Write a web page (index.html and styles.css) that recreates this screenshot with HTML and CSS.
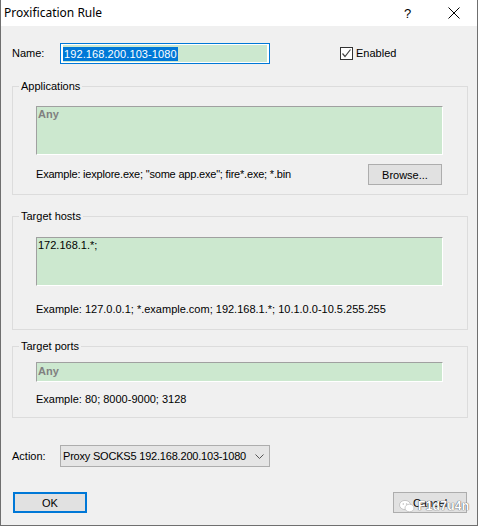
FILE: index.html
```html
<!DOCTYPE html>
<html>
<head>
<meta charset="utf-8">
<link rel="stylesheet" href="styles.css">
</head>
<body>
<div class="window">
  <div class="titlebar">
    <span class="title">Proxification Rule</span>
    <span class="help">?</span>
    <svg class="close" width="12" height="12" viewBox="0 0 12 12"><path d="M0.5 0.5 L11.5 11.5 M11.5 0.5 L0.5 11.5" stroke="#000" stroke-width="1" fill="none"/></svg>
  </div>
  <div class="content">
    <div class="name-row">
      <span class="label">Name:</span>
      <div class="name-input"><div class="name-fill"><span class="sel">192.168.200.103-1080</span></div></div>
      <div class="enabled">
        <span class="checkbox"><svg width="11" height="11" viewBox="0 0 11 11"><path d="M1.5 5.5 L4 8.5 L9.5 1.5" stroke="#444" stroke-width="1.2" fill="none"/></svg></span>
        <span>Enabled</span>
      </div>
    </div>

    <div class="group group-apps">
      <span class="group-label">Applications</span>
      <div class="field tall"><span class="any">Any</span></div>
      <div class="example-row">
        <span class="example">Example: iexplore.exe; "some app.exe"; fire*.exe; *.bin</span>
        <button class="btn browse">Browse...</button>
      </div>
    </div>

    <div class="group group-hosts">
      <span class="group-label">Target hosts</span>
      <div class="field tall"><span class="value">172.168.1.*;</span></div>
      <div class="example">Example: 127.0.0.1; *.example.com; 192.168.1.*; 10.1.0.0-10.5.255.255</div>
    </div>

    <div class="group group-ports">
      <span class="group-label">Target ports</span>
      <div class="field short"><span class="any">Any</span></div>
      <div class="example">Example: 80; 8000-9000; 3128</div>
    </div>

    <div class="action-row">
      <span class="label">Action:</span>
      <div class="select">
        <span class="select-text">Proxy SOCKS5 192.168.200.103-1080</span>
        <svg class="chev" width="9" height="5" viewBox="0 0 9 5"><path d="M0.5 0.5 L4.5 4.5 L8.5 0.5" stroke="#555" stroke-width="1" fill="none"/></svg>
      </div>
    </div>

    <div class="button-row">
      <button class="btn ok">OK</button>
      <div class="cancel-wrap">
        <button class="btn cancel">Cancel</button>
        <div class="watermark">
          <svg width="16" height="14" viewBox="0 0 16 14"><ellipse cx="6" cy="6" rx="5.5" ry="4.6" fill="#fff" stroke="#bbb" stroke-width="0.8"/><ellipse cx="10.5" cy="9" rx="4.5" ry="3.8" fill="#fff" stroke="#bbb" stroke-width="0.8"/><circle cx="4.3" cy="5" r="0.8" fill="#bbb"/><circle cx="7.6" cy="5" r="0.8" fill="#bbb"/></svg>
          <span class="wm-text">F1d7u4n</span>
        </div>
      </div>
    </div>
  </div>
</div>
</body>
</html>
```

FILE: styles.css
```css
html, body {
  margin: 0;
  padding: 0;
  background: #f0f0f0;
}
body {
  font-family: "Liberation Sans", Arial, sans-serif;
  font-size: 11px;
  line-height: 13px;
  color: #000;
}
.window {
  width: 478px;
  height: 526px;
  box-sizing: border-box;
  border: 1px solid #6f6f6f;
  border-top: none;
  background: #f0f0f0;
  display: flex;
  flex-direction: column;
}
.titlebar {
  height: 26px;
  flex: none;
  background: #fff;
  display: flex;
  align-items: center;
}
.title {
  font-family: "Noto Sans", "Liberation Sans", sans-serif;
  font-size: 12px;
  padding-left: 3px;
  flex: 1;
  line-height: 16px;
}
.help {
  font-family: "Liberation Sans", sans-serif;
  font-size: 13px;
  width: 8px;
  margin-right: 36px;
}
.close {
  margin-right: 17px;
}
.content {
  padding: 17px 0 0 11px;
  display: flex;
  flex-direction: column;
}
.name-row {
  display: flex;
  align-items: center;
  height: 21px;
}
.label {
  width: 48px;
}
.name-input {
  width: 210px;
  height: 21px;
  box-sizing: border-box;
  border: 1px solid #0078d7;
  background: #fff;
  padding: 1px 2px;
}
.name-fill {
  height: 17px;
  background: #cce8cf;
  display: flex;
  align-items: center;
}
.sel {
  background: #0078d7;
  color: #fff;
  font-size: 11px;
  line-height: 14px;
  padding: 0 1px;
  letter-spacing: 0.1px;
}
.enabled {
  display: flex;
  align-items: center;
  margin-left: 70px;
  gap: 3px;
}
.checkbox {
  width: 13px;
  height: 13px;
  box-sizing: border-box;
  border: 1px solid #333;
  background: #fff;
  display: flex;
  align-items: center;
  justify-content: center;
}
.group {
  position: relative;
  width: 456px;
  box-sizing: border-box;
  border: 1px solid #dcdcdc;
  padding-left: 23px;
}
.group-label {
  position: absolute;
  top: -7px;
  left: 6px;
  padding: 0 2px;
  background: #f0f0f0;
  line-height: 13px;
}
.group-apps {
  margin-top: 22px;
  padding-top: 19px;
  padding-bottom: 9px;
}
.group-hosts {
  margin-top: 21px;
  padding-top: 20px;
  padding-bottom: 13px;
}
.group-ports {
  margin-top: 16px;
  padding-top: 15px;
  padding-bottom: 11px;
}
.field {
  width: 407px;
  box-sizing: border-box;
  background: #cce8cf;
  border-top: 1px solid #a0a0a0;
  border-left: 1px solid #a0a0a0;
  border-right: 1px solid #fff;
  border-bottom: 1px solid #fff;
  padding: 1px 1px;
}
.field.tall { height: 49px; }
.field.short { height: 20px; padding-top: 2px; }
.any {
  font-weight: bold;
  color: #808080;
}
.group-hosts .example { margin-top: 17px; }
.group-ports .example { margin-top: 11px; }
.example-row {
  margin-top: 9px;
  height: 21px;
  width: 406px;
  display: flex;
  align-items: center;
  justify-content: space-between;
}
.example-row .example {
  letter-spacing: -0.2px;
}
.btn {
  font-family: "Liberation Sans", Arial, sans-serif;
  font-size: 11px;
  background: #e1e1e1;
  border: 1px solid #adadad;
  color: #000;
  padding: 0;
  margin: 0;
  width: 74px;
  height: 21px;
  box-sizing: border-box;
}
.btn.ok {
  border: 2px solid #0078d7;
}
.action-row {
  margin-top: 27px;
  display: flex;
  align-items: center;
  height: 22px;
}
.select {
  width: 210px;
  height: 22px;
  box-sizing: border-box;
  border: 1px solid #adadad;
  background: #e5e5e5;
  display: flex;
  align-items: center;
  justify-content: space-between;
  padding: 0 5px 0 2px;
}
.select-text {
  white-space: nowrap;
  font-size: 11px;
  letter-spacing: -0.2px;
}
.button-row {
  margin-top: 25px;
  display: flex;
  justify-content: space-between;
  width: 454px;
  padding-left: 1px;
}
.cancel-wrap {
  position: relative;
}
.watermark {
  position: absolute;
  left: 6px;
  top: 7px;
  display: flex;
  align-items: center;
  gap: 3px;
  pointer-events: none;
}
.wm-text {
  color: #fff;
  font-size: 12px;
  font-weight: bold;
  letter-spacing: 0.3px;
  text-shadow: 0 0 1px #555, 0 0 1px #555;
}
```
